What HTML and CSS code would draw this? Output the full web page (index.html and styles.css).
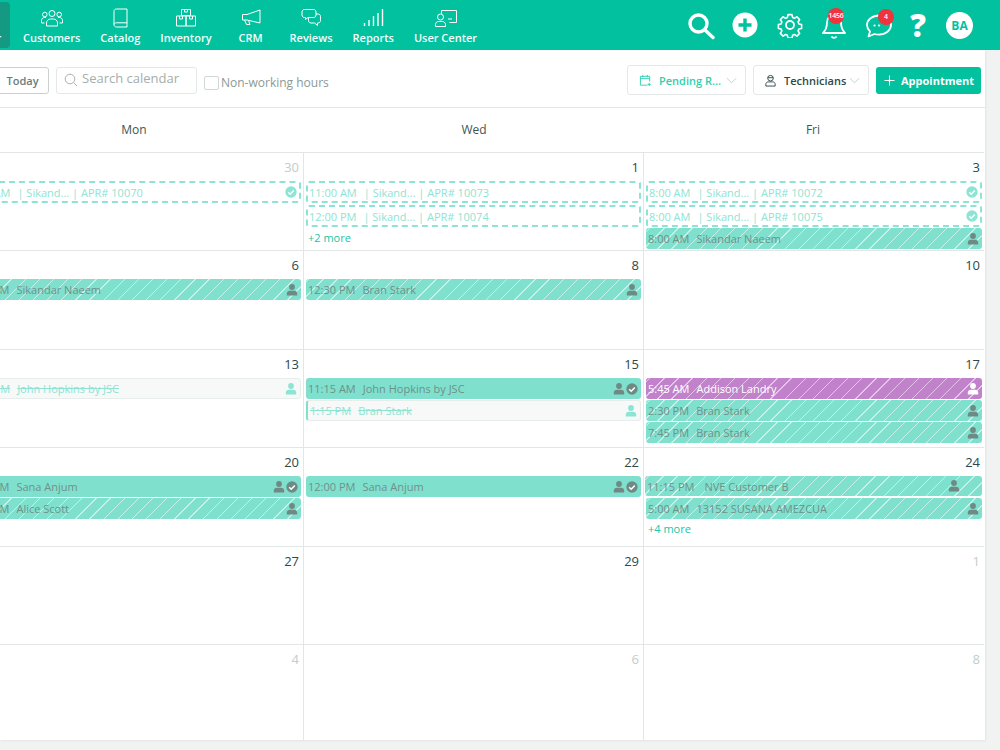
FILE: index.html
```html
<!DOCTYPE html>
<html lang="en">
<head>
<meta charset="utf-8">
<title>Calendar</title>
<link rel="stylesheet" href="styles.css">
</head>
<body>
<svg class="defs" width="0" height="0" aria-hidden="true">
  <symbol id="person" viewBox="0 0 12 12"><circle cx="6" cy="3" r="2.9" fill="currentColor"/><path d="M.8 11.5V9.6C.8 7.9 2.2 6.8 3.8 6.8h4.4c1.6 0 3 1.1 3 2.8v1.9z" fill="currentColor"/></symbol>
  <symbol id="check" viewBox="0 0 12 12"><circle cx="6" cy="6" r="5.7" fill="currentColor"/><path d="M3.2 6.2l2 2 3.6-3.8" fill="none" stroke="#fff" stroke-width="1.5"/></symbol>
</svg>
<header class="topbar">
  <nav class="nav">
    <a class="nav-item active"><span class="nav-ico"></span>Calendar</a>
    <a class="nav-item"><svg class="nav-ico" viewBox="0 0 24 20" fill="none" stroke="#fff"><circle cx="12" cy="5.5" r="3"/><circle cx="4.8" cy="6.5" r="2.3"/><circle cx="19.2" cy="6.5" r="2.3"/><path d="M6.5 18v-3c0-2.5 2-4 4-4h3c2 0 4 1.500 4 4v3zM4.500 15H1.500v-2.500c0-2 1.500-3 3-3h1.500M19.500 15h3v-2.500c0-2-1.500-3-3-3H18"/></svg>Customers</a>
    <a class="nav-item"><svg class="nav-ico" viewBox="0 0 24 20" fill="none" stroke="#fff"><path d="M6 16.500V3.500C6 2 7 1 8.500 1H19v15.500M6 16.500C6 15.200 7 14.800 8.500 14.800H19M6 16.500c0 1.500 1 2.500 2.500 2.500H19v-2.500"/></svg>Catalog</a>
    <a class="nav-item"><svg class="nav-ico" viewBox="0 0 24 20" fill="none" stroke="#fff"><path d="M7.500 1.500h9v6h-9zM10.500 1.500v2.500h3V1.500M2.500 8h9.500v10H2.500zM12 8h9.500v10H12zM5.500 8v3h3V8M15.500 8v3h3V8"/></svg>Inventory</a>
    <a class="nav-item crm"><svg class="nav-ico" viewBox="0 0 24 20" fill="none" stroke="#fff"><path d="M21 2v13L8 12H3.500V6.500H8zM5.500 12l2 4.500h3.500l-1.500-4"/></svg>CRM</a>
    <a class="nav-item"><svg class="nav-ico" viewBox="0 0 24 20" fill="none" stroke="#fff"><path d="M5.500 1.500h9c1.500 0 2.500 1 2.500 2.500v3c0 1.500-1 2.500-2.500 2.500H9l-2.500 2V9.500h-1C4 9.500 3 8.500 3 7V4c0-1.500 1-2.500 2.500-2.500zM17 6h2c1.500 0 2.500 1 2.500 2.500v4c0 1.500-1 2.500-2.500 2.500h-.500v2.500L15.500 15H12c-1.500 0-2.500-1-2.500-2.500v-3"/></svg>Reviews</a>
    <a class="nav-item"><svg class="nav-ico" viewBox="0 0 24 20" fill="none" stroke="#fff" stroke-width="1.400"><path d="M3.500 18v-3M8 18v-6M12.500 18V8M17 18V5M21.500 18V1"/></svg>Reports</a>
    <a class="nav-item"><svg class="nav-ico" viewBox="0 0 24 20" fill="none" stroke="#fff"><path d="M7.500 6V2.500h15V14.500h-7"/><circle cx="6.500" cy="9" r="3"/><path d="M1.500 18.500v-2c0-1.800 1.500-3 3-3h4c1.500 0 3 1.200 3 3v2zM14 11h4"/></svg>User Center</a>
  </nav>
  <div class="actions">
    <span class="act search-a"><svg viewBox="0 0 28 28" fill="none" stroke="#fff" stroke-width="3.400"><circle cx="11.500" cy="11.500" r="8.500"/><path d="M18 18l8 7.500" stroke-linecap="round"/></svg></span>
    <span class="act plus-a"><svg viewBox="0 0 26 26"><circle cx="13" cy="13" r="12.500" fill="#fff"/><path d="M13 6.500v13M6.500 13h13" stroke="#01c19f" stroke-width="3.400"/></svg></span>
    <span class="act gear-a"><svg viewBox="0 0 26 26" fill="none" stroke="#fff" stroke-width="1.800"><circle cx="13" cy="13" r="4"/><path d="M10.800 1.500h4.400l.7 3.200 2 .9 2.800-1.700 3 3.100-1.700 2.700.9 2.100 3 .6v4.400l-3 .7-.9 2 1.700 2.800-3 3-2.800-1.700-2 .9-.7 3h-4.400l-.7-3-2-.9-2.800 1.700-3-3 1.700-2.800-.9-2-3-.7v-4.400l3-.6.900-2.100-1.700-2.700 3-3.100 2.800 1.700 2-.9z" transform="translate(1.300 1.300) scale(.9)" stroke-linejoin="round"/></svg></span>
    <span class="act bell-a"><svg viewBox="0 0 26 28" fill="none" stroke="#fff" stroke-width="1.800"><path d="M13 3c-4.500 0-7 3.500-7 7.500 0 5-1.500 8-4 10.500h22c-2.500-2.500-4-5.500-4-10.500C20 6.500 17.500 3 13 3zM10.500 24.500c1 1.800 4 1.800 5 0" stroke-linejoin="round"/></svg><b class="badge b-bell">1456</b></span>
    <span class="act chat-a"><svg viewBox="0 0 28 26" fill="none" stroke="#fff" stroke-width="1.800"><path d="M14 2.500C7.300 2.500 2 6.800 2 12c0 2.500 1.200 4.700 3 6.400L3.500 23.500l6-2.500c1.400.4 2.900.6 4.500.6 6.700 0 12-4.300 12-9.600S20.700 2.500 14 2.500z" stroke-linejoin="round"/><path d="M9.500 12.500h.1M14 12.500h.1" stroke-width="2.200" stroke-linecap="round"/></svg><b class="badge b-chat">4</b></span>
    <span class="act help-a">?</span>
    <span class="avatar">BA</span>
  </div>
</header>
<main class="panel">
  <section class="toolbar">
    <button class="today">Today</button>
    <label class="search"><svg class="search-ico" viewBox="0 0 14 14" fill="none" stroke="#a9b3b1" stroke-width="1"><circle cx="6" cy="6" r="4.800"/><path d="M9.500 9.500l3.500 3.500"/></svg>Search calendar</label>
    <span class="chk"></span><span class="chk-label">Non-working hours</span>
    <div class="tools-right">
      <span class="drop pending"><svg class="drop-ico" viewBox="0 0 14 14" fill="none" stroke="#2fcfb0"><path d="M9 12H1.500V2.500h10V8M1.500 5h10M4 1v2.500M9 1v2.500M11 9.500v3.500M9.300 11.200h3.400"/></svg><span class="drop-text">Pending R...</span><svg class="chev" viewBox="0 0 12 7" fill="none" stroke="#c3ccca"><path d="M1 1l5 5 5-5"/></svg></span>
      <span class="drop techs"><svg class="drop-ico" viewBox="0 0 14 14" fill="none" stroke="#2d4a47"><circle cx="7" cy="4.500" r="3"/><path d="M4 4h6M2 13v-2c0-1.500 1.200-2.500 2.500-2.500h5c1.300 0 2.500 1 2.500 2.500v2z"/></svg><span class="drop-text">Technicians</span><svg class="chev" viewBox="0 0 12 7" fill="none" stroke="#c3ccca"><path d="M1 1l5 5 5-5"/></svg></span>
      <button class="appt"><svg class="appt-plus" viewBox="0 0 12 12" stroke="#fff" stroke-width="1.200"><path d="M6 .5v11M.5 6h11"/></svg>Appointment</button>
    </div>
  </section>
  <div class="calendar">
    <div class="head">Mon</div><div class="head">Wed</div><div class="head">Fri</div>

    <div class="cell"><div class="num muted">30</div>
      <div class="ev dash"><span class="t">8:00 AM</span><span class="n">| Sikand... | APR# 10070</span><svg class="ic"><use href="#check"/></svg></div></div>
    <div class="cell"><div class="num">1</div>
      <div class="ev dash"><span class="t">11:00 AM</span><span class="n">| Sikand... | APR# 10073</span></div>
      <div class="ev dash"><span class="t">12:00 PM</span><span class="n">| Sikand... | APR# 10074</span></div>
      <a class="more">+2 more</a></div>
    <div class="cell"><div class="num">3</div>
      <div class="ev dash"><span class="t">8:00 AM</span><span class="n">| Sikand... | APR# 10072</span><svg class="ic"><use href="#check"/></svg></div>
      <div class="ev dash"><span class="t">8:00 AM</span><span class="n">| Sikand... | APR# 10075</span><svg class="ic"><use href="#check"/></svg></div>
      <div class="ev hatch"><span class="t">8:00 AM</span><span class="n">Sikandar Naeem</span><svg class="ic"><use href="#person"/></svg></div></div>

    <div class="cell tall"><div class="num">6</div>
      <div class="ev hatch"><span class="t">8:30 AM</span><span class="n">Sikandar Naeem</span><svg class="ic"><use href="#person"/></svg></div></div>
    <div class="cell tall"><div class="num">8</div>
      <div class="ev hatch"><span class="t">12:30 PM</span><span class="n">Bran Stark</span><svg class="ic"><use href="#person"/></svg></div></div>
    <div class="cell tall"><div class="num">10</div></div>

    <div class="cell"><div class="num">13</div>
      <div class="ev cancel"><span class="t">1:15 PM</span><span class="n">John Hopkins by JSC</span><svg class="ic"><use href="#person"/></svg></div></div>
    <div class="cell"><div class="num">15</div>
      <div class="ev solid"><span class="t">11:15 AM</span><span class="n">John Hopkins by JSC</span><svg class="ic"><use href="#person"/></svg><svg class="ic ic2"><use href="#check"/></svg></div>
      <div class="ev cancel bar"><span class="t">1:15 PM</span><span class="n">Bran Stark</span><svg class="ic"><use href="#person"/></svg></div></div>
    <div class="cell"><div class="num">17</div>
      <div class="ev hatch purple"><span class="t">5:45 AM</span><span class="n">Addison Landry</span><svg class="ic"><use href="#person"/></svg></div>
      <div class="ev hatch"><span class="t">2:30 PM</span><span class="n">Bran Stark</span><svg class="ic"><use href="#person"/></svg></div>
      <div class="ev hatch"><span class="t">7:45 PM</span><span class="n">Bran Stark</span><svg class="ic"><use href="#person"/></svg></div></div>

    <div class="cell tall"><div class="num">20</div>
      <div class="ev solid"><span class="t">9:00 AM</span><span class="n">Sana Anjum</span><svg class="ic"><use href="#person"/></svg><svg class="ic ic2"><use href="#check"/></svg></div>
      <div class="ev hatch"><span class="t">9:00 AM</span><span class="n">Alice Scott</span><svg class="ic"><use href="#person"/></svg></div></div>
    <div class="cell tall"><div class="num">22</div>
      <div class="ev solid"><span class="t">12:00 PM</span><span class="n">Sana Anjum</span><svg class="ic"><use href="#person"/></svg><svg class="ic ic2"><use href="#check"/></svg></div></div>
    <div class="cell tall"><div class="num">24</div>
      <div class="ev hatch wide"><span class="t">11:15 PM</span><span class="n">NVE Customer B</span><svg class="ic"><use href="#person"/></svg></div>
      <div class="ev hatch"><span class="t">5:00 AM</span><span class="n">13152 SUSANA AMEZCUA</span><svg class="ic"><use href="#person"/></svg></div>
      <a class="more">+4 more</a></div>

    <div class="cell"><div class="num">27</div></div>
    <div class="cell"><div class="num">29</div></div>
    <div class="cell"><div class="num muted">1</div></div>

    <div class="cell last"><div class="num muted">4</div></div>
    <div class="cell last"><div class="num muted">6</div></div>
    <div class="cell last"><div class="num muted">8</div></div>
  </div>
</main>
</body>
</html>
```

FILE: styles.css
```css
* { box-sizing: border-box; }
html, body { margin: 0; height: 750px; overflow: hidden; }
body { background: #f1f3f3; font-family: "Open Sans", "Noto Sans", sans-serif; color: #2d4a47; }
.defs { display: block; height: 0; }

.topbar { height: 50px; background: #01c19f; display: flex; justify-content: space-between; color: #fff; }
.nav { display: flex; gap: 20px; align-items: flex-start; }
.nav-item { display: flex; flex-direction: column; align-items: center; font-size: 11px; line-height: 15px; font-weight: 600; white-space: nowrap; padding-top: 8px; color: #f4fffc; }
.nav-ico { width: 24px; height: 20px; margin-bottom: 2px; display: block; }
.nav-item.active { width: 65px; height: 46px; margin: 2px -7px 0 -55px; padding-top: 6px; background: #149a82; border-radius: 4px; }
.nav-item.crm { min-width: 38px; }

.actions { display: flex; align-items: center; height: 50px; padding-right: 27px; }
.act { display: block; position: relative; }
.act svg { display: block; width: 100%; height: 100%; }
.search-a { width: 28px; height: 28px; margin-right: 17px; margin-top: 1px; }
.plus-a { width: 26px; height: 26px; margin-right: 19px; }
.gear-a { width: 26px; height: 26px; margin-right: 18px; }
.bell-a { width: 26px; height: 28px; margin-right: 18px; margin-top: 2px; }
.chat-a { width: 28px; height: 26px; margin-right: 15px; margin-top: 2px; }
.help-a { width: 20px; margin-right: 18px; font-size: 31px; line-height: 32px; font-weight: 800; text-align: center; }
.avatar { width: 27px; height: 27px; border-radius: 50%; background: #fff; color: #01c19f; font-size: 12px; line-height: 27px; font-weight: 700; text-align: center; }
.badge { position: absolute; border-radius: 50%; background: #f0333c; color: #fff; font-size: 7px; font-weight: 600; text-align: center; width: 16px; height: 16px; line-height: 16px; top: -4px; }
.b-bell { left: 7px; letter-spacing: -.2px; }
.b-chat { left: 13px; }

.panel { width: 985px; height: 690px; background: #fff; box-shadow: 1px 1px 2px rgba(0,0,0,.06); overflow: hidden; }
.toolbar { height: 58px; display: flex; align-items: center; border-bottom: 1px solid #e2e6e5; padding-right: 4px; }
.today { width: 60px; height: 27px; margin: 3px 0 0 -11px; padding: 0 0 0 7px; background: #fff; border: 1px solid #c9d2d0; border-radius: 3px; font: 600 11px "Open Sans", sans-serif; color: #6b7d7a; }
.search { display: flex; align-items: center; width: 141px; height: 27px; margin: 3px 0 0 7px; padding: 0 0 4px 7px; border: 1px solid #e4e8e7; border-radius: 3px; font-size: 13px; color: #a4aeac; }
.search-ico { width: 14px; height: 14px; margin: 4px 4px 0 0; }
.chk { width: 15px; height: 14px; margin: 8px 2px 0 7px; border: 1px solid #d0d7d5; border-radius: 2px; }
.chk-label { font-size: 12px; color: #8a9a97; margin-top: 8px; }
.tools-right { margin-left: auto; display: flex; align-items: center; gap: 7px; margin-top: 3px; }
.drop { display: flex; align-items: center; height: 30px; border: 1px solid #e4e8e7; border-radius: 3px; font-size: 11px; font-weight: 600; }
.pending { width: 119px; padding-left: 11px; color: #2fcfb0; }
.techs { width: 116px; padding-left: 10px; color: #2d4a47; }
.drop-ico { width: 13px; height: 13px; margin-right: 7px; }
.pending .drop-ico { margin-right: 7px; }
.drop-text { flex: 1; white-space: nowrap; }
.chev { width: 11px; height: 7px; margin-right: 8px; }
.appt { display: flex; align-items: center; width: 105px; height: 27px; padding: 0 0 0 8px; border: 0; border-radius: 3px; background: #01c19f; color: #fff; font: 700 11px "Open Sans", sans-serif; }
.appt-plus { width: 11px; height: 11px; margin-right: 6px; }

.calendar { display: grid; grid-template-columns: repeat(3, 340px); margin-left: -36px; }
.head { height: 45px; line-height: 44px; text-align: center; font-size: 12px; color: #3d5653; border-bottom: 1px solid #e2e6e5; }
.cell { height: 98px; padding: 0 2px 0 2px; border-bottom: 1px solid #e2e6e5; border-right: 1px solid #e2e6e5; display: flex; flex-direction: column; }
.cell.tall { height: 99px; }
.cell.last { height: 97px; border-bottom: 0; }
.calendar > :nth-child(3n) { border-right: 0; padding-right: 2px; }
.cell:nth-child(3n) { width: 340px; }
.num { height: 28px; padding: 5px 2px 0 0; flex: none; text-align: right; font-size: 13px; line-height: 18px; color: #2d4a47; }
.num.muted { color: #c3cccb; }

.ev { flex: none; display: flex; align-items: center; height: 21px; margin-bottom: 1px; padding: 0 2px 0 2px; border-radius: 3px; font-size: 11px; white-space: nowrap; color: #6f918a; }
.t { margin-right: 7px; }
.n { flex: 1; }
.ic { width: 12px; height: 12px; margin-right: 1px; color: #6f8a85; flex: none; }
.ic2 { margin-left: 0; }
.solid { background: #80e0ce; }
.hatch { background: #80e0ce repeating-linear-gradient(-45deg, transparent 0 9px, rgba(255,255,255,.55) 9px 10px); }
.purple { background-color: #c181cb; color: #fff; }
.purple .ic { color: #fff; }
.dash { height: 22px; margin-bottom: 2px; padding: 0 1px; border: 2px dashed #8ce5d4; background: #fff; color: #8fe3d3; }
.dash .t { margin-right: 7px; }
.dash .ic { color: #8ce5d4; }
.dash + .hatch { margin-top: -1px; }
.cancel { background: #f6f9f8; border: 1px solid #e7edeb; color: #8fe3d3; }
.cancel .t, .cancel .n { text-decoration: line-through; }
.cancel .ic { color: #8ce5d4; }
.bar { border-left: 2px solid #80e0ce; }
.wide { height: 20px; margin-bottom: 2px; margin-left: -1px; padding-right: 21px; }
.wide .t { margin-right: 10px; }
.more { font-size: 11px; line-height: 15px; color: #22c5a6; padding: 1px 0 0 2px; }
```
